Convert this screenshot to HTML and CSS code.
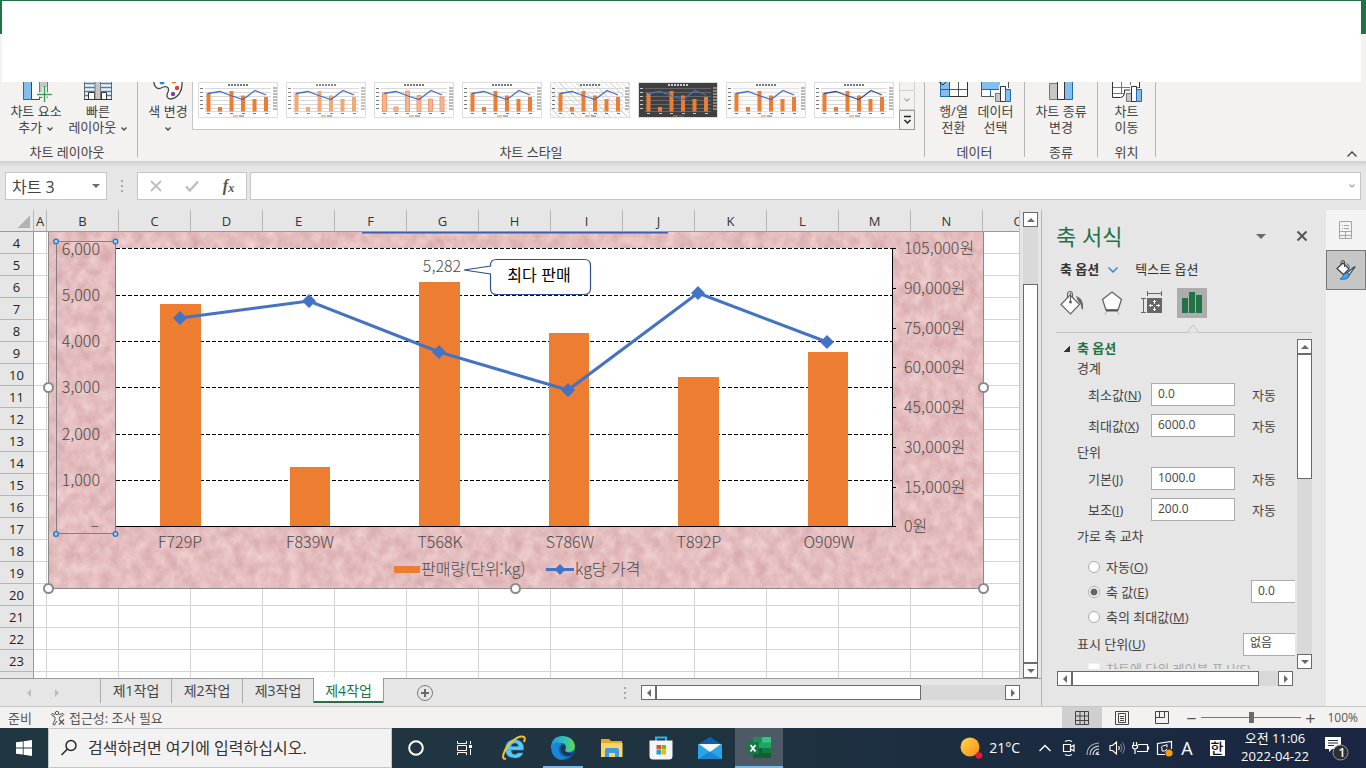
FILE: index.html
```html
<!DOCTYPE html>
<html lang="ko">
<head>
	<meta charset="utf-8">
	<title>차트 서식</title>
	<link rel="stylesheet" href="styles.css">
</head>
<body>

<!-- shared shapes -->
<svg class="defs" width="0" height="0">
	<symbol id="thumb" viewBox="0 0 80 36">
		<path class="grid" d="M7 6.500h66M7 10.500h66M7 14.500h66M7 18.500h66M7 22.500h66M7 26.500h66M7 29.500h66"/>
		<path class="tick" d="M2 6.500h3M2 10.500h3M2 14.500h3M2 18.500h3M2 22.500h3M2 26.500h3M75 6h4M75 9h4M75 12h4M75 15h4M75 18h4M75 21h4M75 24h4M75 27h4M9 31.500h3M21 31.500h3M32 31.500h3M44 31.500h3M55 31.500h3M67 31.500h3"/>
		<path class="title" d="M30 3h20"/>
		<path class="bar" d="M8.500 11h4v18.500h-4zM20 25h4v4.500h-4zM31.500 9h4v20.500h-4zM43 13.500h4v16h-4zM54.500 17h4v12.500h-4zM66 15h4v14.500h-4z"/>
		<path class="line" d="M10 11.500L22 9.500L34 14L45 17.500L57 8.500L68 13"/>
		<path d="M35 34h5" stroke="#ed7d31"/><path d="M41 34h5" stroke="#4472c4"/>
	</symbol>
	<symbol id="chev" viewBox="0 0 8 6"><path d="M1.500 1.500L4 4l2.500-2.500" fill="none" stroke="currentColor" stroke-width="1.300"/></symbol>
</svg>

<div class="titlebar"><div class="blank"></div></div>

<div class="ribbon">
	<div class="group layout">
		<div class="tools">
			<button class="wide">
				<svg width="34" height="20" viewBox="0 0 34 20"><path d="M4.500-2v19.500h8V-2" fill="#83beec" stroke="#1e6cab"/><path d="M12.500-2v19.500h8V-2" fill="#fff" stroke="#444"/><path d="M20.500-2v17.500h8V-2" fill="#c8c6c4" stroke="#777"/><path d="M25.500 5v15M18 12.500h15" stroke="#fff" stroke-width="4"/><path d="M25.500 4v16M18 12.500h15" stroke="#30a14e" stroke-width="1.500"/></svg>
				차트 요소<br>추가 <svg class="chev"><use href="#chev"/></svg>
			</button>
			<button class="wide">
				<svg width="30" height="20" viewBox="0 0 30 20"><path d="M1 1.500h28M1 5.500h28M1 9.500h28M1 13.500h28" stroke="#2b88d8" stroke-width="1.500"/><path d="M1.500-2v19.500h27V-2" fill="none" stroke="#666"/><path d="M5.500 17.500v-7h6v7zM18.500 17.500v-7h5v7z" fill="#fff" stroke="#333"/><path d="M12 0v17.500h5.500V0" fill="#c8c6c4" stroke="#777"/><path d="M1 17.500h28" stroke="#333"/></svg>
				빠른<br>레이아웃 <svg class="chev"><use href="#chev"/></svg>
			</button>
		</div>
		<div class="caption">차트 레이아웃</div>
	</div>
	<div class="group styles">
		<div class="tools">
			<button class="color">
				<svg width="30" height="20" viewBox="0 0 30 20"><path d="M1-3C0 4 4 8 8 6c5-3 9-1 7 4-2 4-1 7 3 7 7-1 11-8 11-14V-3z" fill="#fff" stroke="#444" stroke-width="1.300"/><circle cx="9" cy="0" r="2.500" fill="#2b88d8"/><circle cx="21" cy="-1" r="2.500" fill="#ef7a1a"/><circle cx="24" cy="6" r="2.200" fill="#e03a3a"/><circle cx="20" cy="12" r="2.200" fill="#8e3aa5"/></svg>
				색 변경<br><svg class="chev"><use href="#chev"/></svg>
			</button>
			<div class="gallery">
				<svg class="thumb"><use href="#thumb"/></svg>
				<svg class="thumb striped"><use href="#thumb"/></svg>
				<svg class="thumb pale"><use href="#thumb"/></svg>
				<svg class="thumb"><use href="#thumb"/></svg>
				<svg class="thumb hatched"><use href="#thumb"/></svg>
				<svg class="thumb dark"><use href="#thumb"/></svg>
				<svg class="thumb gray"><use href="#thumb"/></svg>
				<svg class="thumb strong"><use href="#thumb"/></svg>
			</div>
			<div class="gallery-nav">
				<button aria-label="위로"></button>
				<button aria-label="아래로"><svg class="chev"><use href="#chev"/></svg></button>
				<button class="more" aria-label="자세히"><svg width="9" height="10" viewBox="0 0 9 10"><path d="M1 1.500h7M1.500 5l3 3 3-3" fill="none" stroke="#222" stroke-width="1.500"/></svg></button>
			</div>
		</div>
		<div class="caption">차트 스타일</div>
	</div>
	<div class="group data">
		<div class="tools">
			<button class="narrow">
				<svg width="30" height="20" viewBox="0 0 30 20"><path d="M1.500-2v16.500h27V-2" fill="#fff" stroke="#333"/><path d="M2 7h9v7H2zM2-1h9v8H2z" fill="#83beec"/><path d="M10.500 0v14M19.500 0v14M2 7.500h26" stroke="#555"/><path d="M1.500 0v14.500h9" fill="none" stroke="#1e6cab"/><path d="M0 0l4 3 3-3" fill="none" stroke="#333"/></svg>
				행/열<br>전환
			</button>
			<button class="narrow">
				<svg width="32" height="20" viewBox="0 0 32 20"><path d="M1.500-2v16.500h27V-2" fill="#fff" stroke="#555"/><path d="M2-1h18v8H2z" fill="#83beec"/><path d="M1 7.500h27M10.500 7v7" stroke="#1e6cab"/><path d="M14 10h5V3h7v3h6v14H14z" fill="#f3f2f1"/><path d="M15.500 11.500h5v8h-5z" fill="#c8c6c4" stroke="#777"/><path d="M20.500 4.500h5v15h-5z" fill="#fff" stroke="#333"/><path d="M25.500 7.500h5v12h-5z" fill="#83beec" stroke="#1e6cab"/></svg>
				데이터<br>선택
			</button>
		</div>
		<div class="caption">데이터</div>
	</div>
	<div class="group kind">
		<div class="tools">
			<button class="wide">
				<svg width="28" height="20" viewBox="0 0 28 20"><path d="M2.500 1.500h8v16h-8z" fill="#c8c6c4" stroke="#777"/><path d="M17.500-2v19.500h8V-2" fill="#83beec" stroke="#1e6cab"/><path d="M10.500-2v19.500h7V-2" fill="#fff" stroke="#333"/></svg>
				차트 종류<br>변경
			</button>
		</div>
		<div class="caption">종류</div>
	</div>
	<div class="group place">
		<div class="tools">
			<button class="narrow">
				<svg width="32" height="20" viewBox="0 0 32 20"><path d="M1.500-2v17.500h8q3 0 4-4V8h15V-2" fill="#fff" stroke="#333"/><path d="M10.500 0v11M19.500 0v6M2 5.500h26M2 11.500h11" stroke="#777" fill="none"/><path d="M14 10h5V3h7v3h6v14H14z" fill="#f3f2f1"/><path d="M15.500 11.500h5v8h-5z" fill="#c8c6c4" stroke="#777"/><path d="M20.500 4.500h5v15h-5z" fill="#fff" stroke="#333"/><path d="M25.500 7.500h5v12h-5z" fill="#83beec" stroke="#1e6cab"/></svg>
				차트<br>이동
			</button>
		</div>
		<div class="caption">위치</div>
	</div>
	<button class="collapse" aria-label="리본 축소"><svg width="12" height="8" viewBox="0 0 12 8"><path d="M1.500 6.500L6 2l4.500 4.500" fill="none" stroke="#444" stroke-width="1.400"/></svg></button>
</div>

<div class="formula">
	<div class="namebox"><input type="text" value="차트 3" aria-label="이름 상자"><i class="tri down"></i></div>
	<div class="dots"><i></i><i></i><i></i></div>
	<div class="fx">
		<button aria-label="취소"><svg width="12" height="12" viewBox="0 0 12 12"><path d="M1 1l10 10M11 1L1 11" stroke="#bdbdbd" stroke-width="1.800"/></svg></button>
		<button aria-label="입력"><svg width="14" height="12" viewBox="0 0 14 12"><path d="M1 6.500L4.800 10.500 13 1.500" fill="none" stroke="#bdbdbd" stroke-width="2.400"/></svg></button>
		<button class="fn" aria-label="함수 삽입">f<sub>x</sub></button>
	</div>
	<div class="bar"><input type="text" aria-label="수식"><svg class="chev"><use href="#chev"/></svg></div>
</div>

<div class="main">
	<div class="book">
		<div class="upper">
			<div class="sheet">
				<table>
					<thead><tr id="columns"><th class="corner"></th></tr></thead>
					<tbody id="rows"></tbody>
				</table>

				<svg class="chart" width="948" height="370" viewBox="42 232 948 370">
					<defs>
						<filter id="tissue" x="0" y="0" width="100%" height="100%" color-interpolation-filters="sRGB">
							<feTurbulence type="fractalNoise" baseFrequency="0.090 0.080" numOctaves="5" seed="21"/>
							<feColorMatrix values="0.130 0 0 0 0.830  0.210 0 0 0 0.636  0.200 0 0 0 0.646  0 0 0 0 1"/>
						</filter>
					</defs>
					<rect x="48" y="232" width="936" height="357" fill="#e6bfc0" filter="url(#tissue)"/>
					<path d="M48.500 232v356.500h935V232" fill="none" stroke="#8a8a8a"/>
					<path d="M362 232.500h306" stroke="#3f5fa8" stroke-width="2"/>
					<rect x="116" y="248" width="777" height="279" fill="#fff"/>
					<path class="gridline" d="M116 248.500h776M116 295.500h776M116 341.500h776M116 387.500h776M116 434.500h776M116 480.500h776"/>
					<path d="M116 526.500h780M892.500 248v279M892 248.500h4M892 288.500h4M892 328.500h4M892 367.500h4M892 407.500h4M892 447.500h4M892 487.500h4" fill="none" stroke="#000"/>
					<path fill="#ed7d31" d="M160 304h41v222h-41zM290 467h40v59h-40zM419 282h41v244h-41zM549 333h40v193h-40zM678 377h41v149h-41zM808 352h40v174h-40z"/>
					<path d="M180 318L309 301L439 352L568 390L698 293L827 342" fill="none" stroke="#4472c4" stroke-width="3"/>
					<path fill="#4472c4" d="M180 311l7 7-7 7-7-7zM309 294l7 7-7 7-7-7zM439 345l7 7-7 7-7-7zM568 383l7 7-7 7-7-7zM698 286l7 7-7 7-7-7zM827 335l7 7-7 7-7-7z"/>

					<g class="label" text-anchor="end">
						<text x="100" y="255">6,000</text><text x="100" y="301">5,000</text><text x="100" y="347">4,000</text><text x="100" y="393">3,000</text><text x="100" y="440">2,000</text><text x="100" y="486">1,000</text><text x="99" y="531">–</text>
					</g>
					<g class="label">
						<text x="904" y="254">105,000원</text><text x="904" y="294">90,000원</text><text x="904" y="334">75,000원</text><text x="904" y="373">60,000원</text><text x="904" y="413">45,000원</text><text x="904" y="453">30,000원</text><text x="904" y="493">15,000원</text><text x="904" y="532">0원</text>
					</g>
					<g class="label" text-anchor="middle">
						<text x="180" y="548">F729P</text><text x="310" y="548">F839W</text><text x="440" y="548">T568K</text><text x="570" y="548">S786W</text><text x="699" y="548">T892P</text><text x="829" y="548">O909W</text>
						<text x="442" y="272">5,282</text>
					</g>
					<rect x="394" y="566" width="26" height="7" fill="#ed7d31"/>
					<path d="M546 569.500h28" stroke="#4472c4" stroke-width="3"/><path d="M560 564l5.500 5.500-5.500 5.500-5.500-5.500z" fill="#4472c4"/>
					<g class="label"><text x="421" y="575">판매량(단위:kg)</text><text x="575" y="575">kg당 가격</text></g>

					<path d="M490.500 266v-1q0-5.500 6-5.500h88q6 0 6 6v23q0 6-6 6h-88q-6 0-6-6V274L464 270z" fill="#fff" stroke="#2f528f" stroke-width="1.200"/>
					<text class="callout" x="539" y="281" text-anchor="middle">최다 판매</text>

					<rect x="56.500" y="241.500" width="59" height="292" fill="none" stroke="#7f7f7f"/>
					<g fill="#9fd0f5" stroke="#1f7bc8" stroke-width="1.300"><circle cx="56" cy="241.500" r="2.300"/><circle cx="115.500" cy="241.500" r="2.300"/><circle cx="56" cy="534" r="2.300"/><circle cx="115.500" cy="534" r="2.300"/></g>
					<g fill="#fff" stroke="#8a8a8a" stroke-width="2"><circle cx="48.500" cy="387.500" r="4.500"/><circle cx="983.500" cy="387.500" r="4.500"/><circle cx="48.500" cy="588.500" r="4.500"/><circle cx="515.500" cy="588.500" r="4.500"/><circle cx="983.500" cy="588.500" r="4.500"/></g>
				</svg>
			</div>
			<div class="vscroll sheet-scroll">
				<button aria-label="위로"><i class="tri up"></i></button>
				<div class="track"><div class="knob"></div></div>
				<button aria-label="아래로"><i class="tri down"></i></button>
			</div>
		</div>
		<div class="tabs">
			<button class="arrow" aria-label="이전 시트"><i class="tri left"></i></button>
			<button class="arrow" aria-label="다음 시트"><i class="tri right"></i></button>
			<div class="tablist">
				<button>제1작업</button>
				<button>제2작업</button>
				<button>제3작업</button>
				<button class="active">제4작업</button>
			</div>
			<button class="add" aria-label="새 시트"><svg width="18" height="18" viewBox="0 0 18 18"><circle cx="9" cy="9" r="7.500" fill="none" stroke="#7a7a7a"/><path d="M9 5v8M5 9h8" stroke="#6a6a6a" stroke-width="2"/></svg></button>
			<div class="dots"><i></i><i></i><i></i></div>
			<div class="hscroll sheet-hscroll">
				<button aria-label="왼쪽"><i class="tri left"></i></button>
				<div class="track"><div class="knob"></div></div>
				<button aria-label="오른쪽"><i class="tri right"></i></button>
			</div>
		</div>
	</div>

	<div class="pane">
		<div class="pane-head">
			<h1>축 서식</h1>
			<button aria-label="작업창 옵션"><i class="tri down"></i></button>
			<button aria-label="닫기"><svg width="12" height="12" viewBox="0 0 12 12"><path d="M1.500 1.500l9 9M10.500 1.500l-9 9" stroke="#555" stroke-width="2"/></svg></button>
		</div>
		<div class="pane-tabs">
			<button class="active">축 옵션</button>
			<svg width="12" height="8" viewBox="0 0 12 8"><path d="M1.500 1.500L6 6l4.500-4.500" fill="none" stroke="#2b88d8" stroke-width="1.500"/></svg>
			<button>텍스트 옵션</button>
		</div>
		<div class="pane-icons">
			<button aria-label="채우기 및 선"><svg width="26" height="26" viewBox="0 0 26 26"><path d="M17 6q6 2 7 8v6q-2-1-2-5l-3-4z" fill="#6a6a6a"/><path d="M11 5l9.500 9.500L11.500 24 2 14.500z" fill="#fff" stroke="#666" stroke-width="1.200"/><path d="M8.500 8V5q0-3.500 2.500-3.500T13.500 5v2M11.500 3v9" fill="none" stroke="#666" stroke-width="1.200"/><circle cx="11.500" cy="12" r="1.500" fill="#666"/></svg></button>
			<button aria-label="효과"><svg width="26" height="26" viewBox="0 0 26 26"><path d="M13 2l9.500 7.500L19 20H7L3.500 9.500z" fill="#fff" stroke="#666" stroke-width="1.300"/><path d="M7 20.500h12" stroke="#555" stroke-width="2"/><path d="M7 22l-1 3M19 22l1 3" stroke="#bbb"/></svg></button>
			<button aria-label="크기 및 속성"><svg width="26" height="26" viewBox="0 0 26 26"><path d="M8.500 1v5M22.500 1v5M9 3.500h13M2 8.500h5M2 22.500h5M4.500 9v13" stroke="#666" fill="none"/><rect x="8" y="8" width="15" height="15" fill="#666"/><path d="M15.500 10v4M15.500 17v4M10 15.500h4M17 15.500h4M14 11.500h3M14 19.500h3M11.500 14v3M19.500 14v3" stroke="#fff"/></svg></button>
			<button class="active" aria-label="축 옵션"><svg width="26" height="26" viewBox="0 0 26 26"><path d="M3 8h6v15H3zM10 2h6v21h-6zM17 5h6v18h-6z" fill="#217346"/></svg></button>
		</div>
		<svg class="notch" width="14" height="9" viewBox="0 0 14 9"><path d="M0 8.500L1 8.500 7 1l6 7.500h1" fill="#e6e6e6" stroke="#c0c0c0"/></svg>
		<div class="pane-body">
			<form>
				<h2><i></i>축 옵션</h2>
				<h3>경계</h3>
				<div class="row"><label for="min">최소값(<u>N</u>)</label><input type="text" id="min" value="0.0"><span>자동</span></div>
				<div class="row"><label for="max">최대값(<u>X</u>)</label><input type="text" id="max" value="6000.0"><span>자동</span></div>
				<h3>단위</h3>
				<div class="row"><label for="major">기본(<u>J</u>)</label><input type="text" id="major" value="1000.0"><span>자동</span></div>
				<div class="row"><label for="minor">보조(<u>I</u>)</label><input type="text" id="minor" value="200.0"><span>자동</span></div>
				<h3>가로 축 교차</h3>
				<div class="choices">
					<div class="choice"><input type="radio" name="cross" id="auto"><label for="auto">자동(<u>O</u>)</label></div>
					<div class="choice"><input type="radio" name="cross" id="value" checked><label for="value">축 값(<u>E</u>)</label><input type="text" value="0.0" aria-label="축 값"></div>
					<div class="choice"><input type="radio" name="cross" id="top"><label for="top">축의 최대값(<u>M</u>)</label></div>
				</div>
				<div class="units"><label for="unit">표시 단위(<u>U</u>)</label><select id="unit"><option>없음</option></select></div>
				<div class="choice off"><input type="checkbox" id="unitlabel" disabled><label for="unitlabel">차트에 단위 레이블 표시(<u>S</u>)</label></div>
			</form>
			<div class="vscroll">
				<button type="button" aria-label="위로"><i class="tri up"></i></button>
				<div class="track"><div class="knob"></div></div>
				<button type="button" aria-label="아래로"><i class="tri down"></i></button>
			</div>
		</div>
		<div class="hscroll pane-hscroll">
			<button aria-label="왼쪽"><i class="tri left"></i></button>
			<div class="track"><div class="knob"></div></div>
			<button aria-label="오른쪽"><i class="tri right"></i></button>
		</div>
	</div>

	<div class="strip">
		<button aria-label="속성"><svg width="16" height="20" viewBox="0 0 16 20"><path d="M1.500 1.500h12v17h-12zM1 11.500h12M1 15.500h12M7.500 12v6M4 5.500h1M6 5.500h5M4 8.500h1M6 8.500h5" fill="none" stroke="#a5a5a5"/></svg></button>
		<button class="active" aria-label="서식"><svg width="22" height="22" viewBox="0 0 22 22"><path d="M8 4l6 6-5.500 5.500L2 9.500z" fill="#fff" stroke="#444" stroke-width="1.300"/><path d="M6 6V3.500Q6 1.500 8 1.500T9.500 4v4" fill="none" stroke="#444"/><path d="M11 4q4 1 4 6l-2-3z" fill="#2b88d8"/><path d="M20 8l-6 8-2-2 7-6z" fill="#fff" stroke="#444" stroke-width="1.200"/><path d="M11.500 14q3 1 2.500 3-1 4-9 3 3-1 3-3 1-3 3.500-3z" fill="#4aa3e8" stroke="#1e6cab"/></svg></button>
	</div>
</div>

<div class="status">
	<span>준비</span>
	<button class="access"><svg width="16" height="16" viewBox="0 0 16 16"><g fill="none" stroke="#555"><circle cx="7" cy="3" r="1.700"/><path d="M5 4.500L2 3.500q-1.500 1 0 2l3 1.500v3l-2 4q0 1.500 1.500 1L7 11M9 4.500l4-1q1.500 1 0 2L9.500 7v2"/><path d="M9 9.500l5 5M14 9.500l-5 5" stroke-width="1.400"/></g></svg>접근성: 조사 필요</button>
	<div class="views">
		<button class="active" aria-label="기본"><svg width="14" height="14" viewBox="0 0 14 14"><path d="M.5.5h13v13H.5zM.5 5h13M.5 9.500h13M5 .5v13M9.500.5v13" fill="none" stroke="#444"/></svg></button>
		<button aria-label="페이지 레이아웃"><svg width="14" height="14" viewBox="0 0 14 14"><path d="M.5.5h13v13H.5zM3.500 2.500h7v9h-7zM5 5.500h4M5 7.500h4M5 9.500h4" fill="none" stroke="#444"/></svg></button>
		<button aria-label="페이지 나누기"><svg width="14" height="14" viewBox="0 0 14 14"><path d="M.5.500h13v12H.5zM4.500.5v6M9.500.5v6h-9" fill="none" stroke="#444"/></svg></button>
	</div>
	<button class="zoom" aria-label="축소">−</button>
	<input type="range" min="10" max="190" value="100" aria-label="확대/축소">
	<button class="zoom" aria-label="확대">+</button>
	<span class="percent">100%</span>
</div>

<div class="taskbar">
	<button class="start" aria-label="시작"><svg width="16" height="16" viewBox="0 0 16 16"><path d="M0 2.300L6.800 1.400v6.200H0zM7.600 1.300L16 0v7.600H7.600zM0 8.400h6.800v6.200L0 13.700zM7.600 8.400H16V16l-8.400-1.300z" fill="#fff"/></svg></button>
	<div class="search"><svg width="18" height="18" viewBox="0 0 18 18"><circle cx="11" cy="6.500" r="5" fill="none" stroke="#222" stroke-width="1.400"/><path d="M7.500 10L1.500 16" stroke="#222" stroke-width="1.500"/></svg><input type="text" placeholder="검색하려면 여기에 입력하십시오." aria-label="검색"></div>
	<div class="apps">
		<button aria-label="Cortana"><svg width="18" height="18" viewBox="0 0 18 18"><circle cx="9" cy="9" r="6.800" fill="none" stroke="#fff" stroke-width="2"/></svg></button>
		<button aria-label="작업 보기"><svg width="18" height="16" viewBox="0 0 18 16"><path d="M1.500 1v2.500h9V1M1.500 15v-2.500h9V15M1.500 5.500h9v5h-9zM14.500 1v3M14.500 9v6" fill="none" stroke="#fff"/><path d="M13 5h3v3h-3z" fill="#fff"/></svg></button>
		<button aria-label="Internet Explorer"><svg width="26" height="26" viewBox="0 0 26 26"><path d="M6 15h16.500q1-9.500-8.500-10.500Q4.500 5 4.500 14T14 23q6 0 8-5h-5q-1.500 1.500-3.500 1.500-3 0-3.500-4.500M10 11.500q.5-3.500 4-3.500t3.500 3.500z" fill="#5cc8f2" fill-rule="evenodd" stroke="#2a9fd8" stroke-width=".5"/><path d="M5 23.500Q1 25 2.500 19 5 11 12 5.500T23 2q1.500 1 0 5" fill="none" stroke="#f3c12b" stroke-width="2"/></svg></button>
		<button class="open" aria-label="Edge"><svg width="24" height="24" viewBox="0 0 24 24"><defs><linearGradient id="edge" x1="0" x2="1"><stop offset="0" stop-color="#1ba0e2"/><stop offset=".6" stop-color="#35c1b1"/><stop offset="1" stop-color="#66d846"/></linearGradient></defs><circle cx="12" cy="12" r="12" fill="#0f62b5"/><path d="M0 11Q1 0 12 0q11 1 12 10 0 6-7 6-4 0-2-3 1-6-5-6Q3 7 0 13z" fill="url(#edge)"/><path d="M1 9q4-5 10-1-4 2-3 7 1 6 8 6-4 4-9 2-8-4-6-14z" fill="#1b86d6"/><path d="M11.500 8.500q-3 3-1.500 6.500 2 5 9 5 2-1 4-4-4 2-7 .5-4-1.500-1.500-4.500 0-3-3-3.500z" fill="#203640"/></svg></button>
		<button aria-label="파일 탐색기"><svg width="24" height="20" viewBox="0 0 24 20"><path d="M1 1h8l2 2h11v16H1z" fill="#e9a820"/><path d="M1 5h21.500v14H1z" fill="#fbd56a"/><path d="M5 19v-7q0-2 2-2h10q2 0 2 2v7h-4v-4H9v4z" fill="#3f9bdc"/></svg></button>
		<button aria-label="스토어"><svg width="24" height="24" viewBox="0 0 24 24"><path d="M7 6V1.500h10V6" fill="none" stroke="#35b3e8" stroke-width="2"/><path d="M.5 4.500h23V20q0 3.500-3.500 3.500H4Q.5 23.500.5 20z" fill="#f5f5f5"/><path d="M7.500 9H12v4.500H7.500z" fill="#e2512b"/><path d="M12.500 9H17v4.500h-4.500z" fill="#7fba00"/><path d="M7.500 14H12v4.500H7.500z" fill="#1ea1e0"/><path d="M12.500 14H17v4.500h-4.500z" fill="#f7b500"/></svg></button>
		<button aria-label="메일"><svg width="26" height="22" viewBox="0 0 26 22"><path d="M1 7.500L13 0l12 7.500z" fill="#0f5fb0"/><path d="M1 7h24v15H1z" fill="#2aa5ea"/><path d="M2 7h22l-11 8z" fill="#f4f8fb"/><path d="M1 22L13 14.500 25 22z" fill="#1b86d6"/></svg></button>
		<button class="open current" aria-label="Excel"><svg width="24" height="22" viewBox="0 0 24 22"><path d="M6 0h18v21H6z" fill="#21a366"/><path d="M6 0h9v5.500H6z" fill="#1f8f56"/><path d="M15 0h9v5.500h-9z" fill="#33c481"/><path d="M6 11h9v10H6z" fill="#185c37"/><path d="M15 11h9v5h-9z" fill="#107c41"/><path d="M15 16h9v5h-9z" fill="#185c37"/><rect y="5" width="12" height="12" rx="1" fill="#107c41"/><path d="M3.500 8l5 6.500M8.500 8l-5 6.500" stroke="#fff" stroke-width="1.800"/></svg></button>
	</div>
	<div class="tray">
		<button class="weather"><svg width="24" height="24" viewBox="0 0 24 24"><defs><linearGradient id="sun" x1="0" y1="0" x2="1" y2="1"><stop offset="0" stop-color="#ffd94f"/><stop offset="1" stop-color="#f68a12"/></linearGradient></defs><circle cx="11" cy="11" r="9.500" fill="url(#sun)"/><circle cx="20" cy="19.500" r="3.300" fill="#e8173d"/></svg>21°C</button>
		<button aria-label="숨겨진 아이콘"><svg width="14" height="8" viewBox="0 0 14 8"><path d="M1.500 7L7 1.500 12.500 7" fill="none" stroke="#fff" stroke-width="1.400"/></svg></button>
		<button aria-label="모임"><svg width="14" height="18" viewBox="0 0 14 18"><path d="M1.500 5.500h7v7h-7zM8.500 8l3.500-2v6l-3.500-2M3 2.500q3.500-2 7 0M3 15.500q3.500 2 7 0" fill="none" stroke="#fff" stroke-width="1.200"/></svg></button>
		<button aria-label="네트워크"><svg width="15" height="15" viewBox="0 0 15 15"><g fill="none" stroke="#ddd" stroke-width="1.200"><path d="M1 14Q1 3 13 2" opacity=".7"/><path d="M4 14q0-8 9-9M7 14q0-5.500 6-6M10 14q0-3 3-3"/></g><path d="M11 12l3 2h-3z" fill="#fff"/></svg></button>
		<button aria-label="볼륨"><svg width="17" height="14" viewBox="0 0 17 14"><path d="M1 4.500h2.500L7.500 1v12l-4-3.500H1zM9.500 5q1.500 2 0 4" fill="none" stroke="#fff" stroke-width="1.100"/><path d="M11.500 3q3 4 0 8M13.500 1.500q4 5.500 0 11" fill="none" stroke="#889"/></svg></button>
		<button aria-label="전원"><svg width="18" height="14" viewBox="0 0 18 14"><path d="M6 3.500h9.500v7H5M16.500 5.500v3M1.500 1v3M4.500 1v3M.5 4.500h5v2q-2.500 3-5 0zM3 8v5" fill="none" stroke="#fff" stroke-width="1.200"/></svg></button>
		<button aria-label="업데이트"><svg width="18" height="17" viewBox="0 0 18 17"><path d="M9 14.500H1.500v-11l14-2V9" fill="none" stroke="#fff" stroke-width="1.200"/><path d="M5 8q1-3 4-2.500l2-1v3M11 9q-2 3-5 2v-3" fill="none" stroke="#fff"/><circle cx="13" cy="13" r="3.600" fill="#ff9b10"/></svg></button>
		<button class="latin">A</button>
		<button class="ime"><b>한</b></button>
		<div class="clock">오전 11:06<br>2022-04-22</div>
		<button class="notes" aria-label="알림"><svg width="26" height="26" viewBox="0 0 26 26"><path d="M1 2h16v12H8l-3 3v-3H1z" fill="#fff"/><path d="M4 5.500h10M4 8h10M4 10.500h6" stroke="#1c2b40"/><circle cx="16.500" cy="17.500" r="7.500" fill="#2b2f36" stroke="#999"/></svg><span>1</span></button>
	</div>
</div>

<script src="sheet.js"></script>
</body>
</html>
```
FILE: styles.css
```css
/* Reset */

* { box-sizing: border-box; margin: 0; padding: 0; }

html, body { height: 100%; }

body {
	display: flex;
	flex-direction: column;
	overflow: hidden;
	background: #e6e6e6;
	color: #444;
	font: 13px/16px "Open Sans", "Noto Sans CJK KR", sans-serif;
}

button, input, select {
	font: inherit;
	color: inherit;
	border: 0;
	background: none;
	border-radius: 0;
}

svg { display: block; }
.defs { position: absolute; }
h1, h2, h3 { font-size: 13px; font-weight: normal; }

.chev { display: inline-block; width: 8px; height: 6px; vertical-align: middle; }


/* Little triangles */

.tri { display: block; width: 0; border: 4px solid transparent; color: #6a6a6a; }
.tri.up { border-top: 0; border-bottom-color: currentColor; }
.tri.down { border-bottom: 0; border-top-color: currentColor; }
.tri.left { border-left: 0; border-right-color: currentColor; }
.tri.right { border-right: 0; border-left-color: currentColor; }


/* Title bar */

.titlebar {
	flex: none;
	height: 82px;
	padding: 1px 5px 0 2px;
	background: linear-gradient(#217346 34px, #f3f2f1 34px);
}

.blank { height: 81px; background: #fff; }


/* Ribbon */

.ribbon {
	flex: none;
	display: flex;
	height: 79px;
	background: #f3f2f1;
	overflow: hidden;
}

.group {
	display: flex;
	flex-direction: column;
	justify-content: space-between;
	height: 75px;
	border-right: 1px solid #b5b5b5;
}

.tools { display: flex; justify-content: center; }
.tools > button { text-align: center; white-space: nowrap; }
.tools > button > svg:first-child { margin: 0 auto 1px; }
.caption { height: 16px; line-height: 16px; text-align: center; margin-bottom: -3px; }

.layout { width: 138px; padding: 0 8px 0 5px; }
.wide { width: 62px; }
.narrow { width: 42px; }
.styles { width: 787px; }
.color { width: 60px; margin-right: -6px; }
.styles .tools { justify-content: flex-start; }
.data { width: 100px; }
.kind { width: 73px; }
.place { width: 58px; }

.gallery {
	display: flex;
	gap: 8px;
	height: 48px;
	width: 707px;
	padding: 0 5px;
	background: #fff;
	border: solid #c6c6c6;
	border-width: 0 0 1px 1px;
}

.thumb {
	width: 80px;
	height: 36px;
	box-shadow: inset 0 0 0 1px #ddd;
	fill: none;
	--bar: #ed7d31;
	--grid: #d9d9d9;
	--tick: #777;
	--line: #4472c4;
}

#thumb .grid { stroke: var(--grid); }
#thumb .tick { stroke: var(--tick); }
#thumb .title { stroke: var(--tick); stroke-width: 2; stroke-dasharray: 2 1; }
#thumb .bar { fill: var(--bar); stroke: var(--edge, none); }
#thumb .line { stroke: var(--line); stroke-width: 1.3; }

.thumb.striped { --bar: #f4a873; --tick: #888; }
.thumb.pale { --bar: #f8b490; --edge: #f19a6b; }
.thumb.hatched { background: repeating-linear-gradient(45deg, #fff 0 3px, #e0e0e0 3px 4px); }
.thumb.dark { background: #404040; --grid: #666; --tick: #ccc; }
.thumb.gray { background: #fafafa; --grid: #e2e2e2; }
.thumb.strong { --line: #2f5597; }

.gallery-nav {
	display: flex;
	flex-direction: column;
	width: 16px;
	height: 48px;
}

.gallery-nav button {
	display: flex;
	align-items: center;
	justify-content: center;
	height: 19px;
	border: 1px solid #d0d0d0;
	border-top: 0;
	color: #aaa;
}

.gallery-nav button:first-child { height: 9px; }
.gallery-nav .more { height: 20px; border: 1px solid #999; }

.collapse { align-self: flex-end; margin: 0 8px 3px auto; }


/* Formula bar */

.formula {
	flex: none;
	display: flex;
	height: 49px;
	padding: 11px 5px 10px;
	background: linear-gradient(#cfcfcf, #e6e6e6 6px);
}

.namebox, .fx, .bar {
	display: flex;
	align-items: center;
	background: #fff;
	border: 1px solid #c6c6c6;
}

.namebox { width: 102px; padding: 0 6px; }
.namebox input { flex: 1; min-width: 0; font-size: 16px; }

.dots {
	display: flex;
	flex-direction: column;
	justify-content: center;
	gap: 3px;
	width: 30px;
	align-items: center;
}
.dots i { width: 2px; height: 2px; background: #a8a8a8; }

.fx { width: 110px; margin-right: 3px; justify-content: space-around; }
.fx .fn { font: italic bold 16px "Liberation Serif", serif; color: #555; }
.fx sub { font-size: 12px; vertical-align: -1px; }
.bar { flex: 1; padding-right: 4px; color: #aaa; }
.bar input { flex: 1; }


/* Work area */

.main { flex: 1; display: flex; min-height: 0; }
.book { flex: 1; display: flex; flex-direction: column; min-width: 0; }
.upper { flex: 1; display: flex; min-height: 0; }

.sheet {
	flex: 1;
	position: relative;
	overflow: hidden;
	min-width: 0;
	background: #fff;
	border-right: 1px solid #c6c6c6;
}

.sheet table {
	table-layout: fixed;
	width: 0;
	border-collapse: separate;
	border-spacing: 0;
}

.sheet th, .sheet td { height: 22px; width: 72px; }
.sheet td { border: solid #d4d4d4; border-width: 0 1px 1px 0; }

.sheet th {
	background: #e6e6e6;
	color: #333;
	font-weight: normal;
	line-height: 18px;
	text-align: center;
}

.sheet thead th {
	border-bottom: 1px solid #999;
	border-right: 1px solid #b5b5b5;
}

.sheet tbody th {
	border-right: 1px solid #999;
	border-bottom: 1px solid #b5b5b5;
	color: #222;
}

.sheet th:first-child { width: 34px; }
.sheet th.slim { width: 13px; }

.sheet .corner {
	background: linear-gradient(135deg, transparent 50%, #b2b2b2 50%) 17px 5px / 13px 13px no-repeat #e6e6e6;
}

.chart {
	position: absolute;
	left: 42px;
	top: 22px;
}

.chart text {
	font-family: "Noto Sans CJK KR", sans-serif;
	font-size: 16px;
}

.chart .label { fill: #4a4a4a; font-weight: 300; }
.chart .callout { fill: #000; }
.gridline { stroke: #000; stroke-dasharray: 4 2; }


/* Scroll bars */

.vscroll, .hscroll { display: flex; flex: none; }
.vscroll { flex-direction: column; width: 15px; }
.hscroll { height: 15px; }

.vscroll button, .hscroll button {
	flex: none;
	display: flex;
	align-items: center;
	justify-content: center;
	width: 15px;
	height: 15px;
	background: #fff;
	border: 1px solid #6a6a6a;
}

.track { flex: 1; display: flex; background: #d9d9d9; }
.vscroll .track { flex-direction: column; }
.knob { background: #fff; border: 1px solid #6a6a6a; }

.sheet-scroll { margin: 2px 3px 0; }
.sheet-scroll .knob { flex: 1; margin-top: 57px; }
.sheet-hscroll .knob { width: 76%; }
.pane-hscroll .knob { width: 91%; }
.pane-body .knob { height: 125px; }


/* Sheet tabs */

.tabs {
	flex: none;
	display: flex;
	align-items: center;
	height: 28px;
	border-top: 1px solid #999;
	padding: 0 21px 0 15px;
}

.arrow { display: flex; justify-content: center; width: 28px; }
.arrow .tri { color: #bbb; }

.tablist {
	display: flex;
	align-self: flex-start;
	margin-left: 29px;
	margin-top: -1px;
}

.tablist button {
	width: 71px;
	height: 25px;
	font-size: 14px;
	line-height: 24px;
	border-left: 1px solid #aaa;
}

.tablist .active {
	background: #fff;
	color: #217346;
	border: solid #999;
	border-width: 0 1px;
	box-shadow: inset 0 -2px #217346;
}

.add { margin: 0 0 0 32px; }
.tabs .dots { margin-left: auto; margin-right: 1px; }
.sheet-hscroll { flex: 0 1 379px; }


/* Format pane */

.pane {
	flex: none;
	display: flex;
	flex-direction: column;
	width: 285px;
	margin: 0;
	padding: 14px 14px 20px;
	border-left: 1px solid #b5b5b5;
}

.pane-head { display: flex; align-items: center; height: 24px; }
.pane h1 { flex: 1; font-size: 22px; line-height: 24px; color: #217346; }
.pane-head .tri { border-width: 5px 5px 0; }
.pane-head button:last-child { margin: 0 4px 0 30px; }

.pane-tabs {
	display: flex;
	align-items: center;
	height: 22px;
	margin: 10px 0 8px 4px;
	color: #333;
}
.pane-tabs .active { font-weight: 600; }
.pane-tabs svg { margin: 2px 16px 0 8px; }

.pane-icons { display: flex; gap: 10px; padding-left: 1px; }
.pane-icons button {
	display: flex;
	align-items: center;
	justify-content: center;
	width: 30px;
	height: 30px;
}
.pane-icons .active { background: #adadad; }

.pane .notch {
	align-self: flex-start;
	margin: 6px 0 -1px 130px;
	position: relative;
}

.pane-body {
	flex: 1;
	display: flex;
	min-height: 0;
	border-top: 1px solid #c0c0c0;
	padding-top: 6px;
	margin-bottom: 2px;
}

.pane-body form { flex: 1; overflow: hidden; min-width: 0; margin-right: 2px; }
.pane-body h2 { display: flex; align-items: center; height: 18px; color: #217346; font-weight: 600; }
.pane-body h2 i {
	width: 7px;
	height: 7px;
	margin: 0 7px 0 7px;
	background: linear-gradient(135deg, transparent 50%, #333 50%);
}
.pane-body h3 { padding-left: 21px; line-height: 22px; }

.row { display: flex; align-items: center; height: 31px; padding-left: 32px; }
.row label { width: 63px; white-space: nowrap; }

.pane-body input[type=text], .pane-body select {
	width: 84px;
	height: 23px;
	padding: 0 6px 2px;
	font-size: 12px;
	background: #fff;
	border: 1px solid #ababab;
}
.row span { margin-left: 17px; }

.choices { margin-top: 7px; }
.choice { display: flex; align-items: center; height: 25px; padding-left: 32px; white-space: nowrap; }
.choice input[type=text] { flex: none; margin-left: auto; margin-right: -40px; }

input[type=radio], input[type=checkbox] {
	appearance: none;
	width: 12px;
	height: 12px;
	margin-right: 6px;
	background: #fff;
	border: 1px solid #ababab;
}
input[type=radio] { border-radius: 50%; }
input[type=radio]:checked { background: radial-gradient(#666 3px, #fff 4px); }

.units { display: flex; align-items: center; justify-content: space-between; height: 30px; padding-left: 21px; }
.units select { appearance: none; flex: none; margin-right: -32px; }
.choice.off { height: 20px; color: #a5a5a5; }
.off input[type=checkbox] { border-color: #f0f0f0; }

.pane-hscroll { margin-left: 1px; margin-right: 19px; }


/* Side strip */

.strip { flex: none; width: 40px; background: #f3f3f3; }
.strip button {
	display: flex;
	align-items: center;
	justify-content: center;
	width: 40px;
	height: 40px;
}
.strip .active { background: #c6c6c6; border: 1px solid #777; }


/* Status bar */

.status {
	flex: none;
	display: flex;
	align-items: center;
	height: 22px;
	padding: 0 8px;
	background: #f3f2f1;
	border-top: 1px solid #c6c6c6;
	color: #555;
}

.access { display: flex; gap: 3px; margin-left: 18px; }
.views { display: flex; align-self: stretch; margin-left: auto; }
.views button { display: flex; align-items: center; justify-content: center; width: 40px; }
.views .active { background: #cfcfcf; }
.zoom { width: 19px; font-size: 18px; line-height: 18px; }
.percent { width: 38px; text-align: right; font-size: 12px; }

input[type=range] {
	appearance: none;
	width: 100px;
	height: 12px;
	background: linear-gradient(#777, #777) center / 100% 1px no-repeat;
}
input[type=range]::-webkit-slider-thumb {
	appearance: none;
	width: 5px;
	height: 11px;
	background: #6a6a6a;
}


/* Taskbar */

.taskbar {
	flex: none;
	display: flex;
	height: 40px;
	color: #fff;
	background: linear-gradient(90deg, #203640, #1f3440 50%, #1b2b40 75%, #1a2642);
}

.taskbar button { display: flex; align-items: center; justify-content: center; }
.start { width: 48px; }

.search {
	display: flex;
	align-items: center;
	gap: 10px;
	width: 344px;
	padding-left: 11px;
	background: #f2f2f2;
	border: 1px solid #c6c6c6;
	color: #222;
}
.search input { flex: 1; font-size: 16px; }
.search input::placeholder { color: #333; }

.apps { display: flex; gap: 1px; }
.apps button { width: 48px; }
.apps .open { background: linear-gradient(#76b9ed, #76b9ed) center bottom / 40px 2px no-repeat; }
.apps .current { background: linear-gradient(#76b9ed, #76b9ed) center bottom / 48px 2px no-repeat #4c5a66; }

.tray { display: flex; margin-left: auto; padding-right: 5px; }
.tray button { width: 24px; }
.tray .weather { width: auto; gap: 6px; margin-right: 13px; font-size: 14px; }
.tray .latin { width: 20px; font-size: 18px; }
.tray .ime { width: 40px; }
.ime b { width: 15px; background: #fff; color: #111; font-size: 14px; line-height: 16px; font-weight: 500; }
.clock { width: 76px; font-size: 13px; line-height: 18px; text-align: center; padding-top: 1px; }

.tray .notes { position: relative; width: 48px; }
.notes span { position: absolute; left: 24px; top: 17px; width: 10px; font-size: 12px; line-height: 16px; font-weight: 600; }
```
FILE: sheet.js
```js
// column letters and blank rows
var columns = document.getElementById("columns");
var rows = document.getElementById("rows");
var letters = "ABCDEFGHIJKLMNO".split("");

letters.forEach(function(letter) {
	var th = document.createElement("th");
	th.textContent = letter;
	if (letter === "A") th.className = "slim";
	columns.appendChild(th);
});

// the row after the last number only shows its top edge
for (var n = 4; n <= 24; n++) {
	var tr = document.createElement("tr");
	tr.innerHTML = "<th>" + (n < 24 ? n : "") + "</th>" + letters.map(function() { return "<td></td>"; }).join("");
	rows.appendChild(tr);
}
```
